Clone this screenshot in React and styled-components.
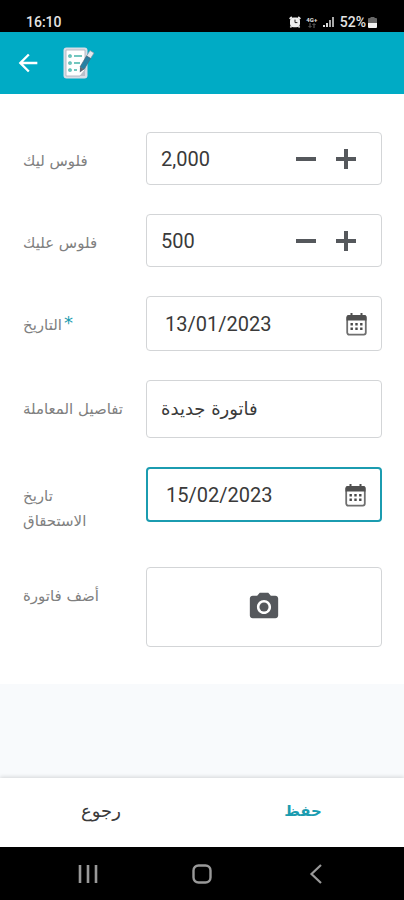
import React from 'react';
import styled, { createGlobalStyle, ThemeProvider } from 'styled-components';
import { MdArrowBack, MdCameraAlt } from 'react-icons/md';

const theme = {
  color: {
    primary: '#00abc5',
    accent: '#1b9cb0',
    border: '#d3d5d7',
    label: '#808080',
    text: '#3a3a3a',
    icon: '#55585c',
    pageBg: '#f8fafc',
  },
  font: {
    body: "Roboto, 'DejaVu Sans', sans-serif",
    arabic: "'DejaVu Sans', sans-serif",
  },
};

const AlarmIcon = () => (
  <svg width="12" height="12" viewBox="0 0 12 12" aria-hidden="true">
    <path
      d="M0.600 2.800 2.800 0.800M11.400 2.800 9.200 0.800M2.400 10.200 1.400 11.400M9.600 10.200l1 1.200"
      stroke="#eee"
      strokeWidth="1.6"
    />
    <rect x="1" y="1.4" width="10" height="9.8" rx="3.6" fill="#eee" />
    <path d="M6 3.6v3h2.4" fill="none" stroke="#222" strokeWidth="1" />
  </svg>
);

const DataArrowsIcon = () => (
  <svg width="8" height="5" viewBox="0 0 8 5" aria-hidden="true">
    <path d="M2 0v4M0.500 3 2 4.500 3.500 3M6 5V1M4.500 2 6 0.500 7.500 2" fill="none" stroke="#666" />
  </svg>
);

const SignalIcon = () => (
  <svg width="12" height="12" viewBox="0 0 12 12" aria-hidden="true">
    <path d="M0 9h2v2H0zM3 7h2v4H3z" fill="#ddd" />
    <path d="M6 4h2v7H6zM9 1h2v10H9z" fill="#aaa" />
  </svg>
);

const BatteryIcon = () => (
  <svg width="9" height="13" viewBox="0 0 9 13" aria-hidden="true">
    <path d="M2.5 1h4v1h1.5q1 0 1 1v4H0V3q0-1 1-1h1.5z" fill="#666" />
    <path d="M0 7h9v4q0 1-1 1H1q-1 0-1-1z" fill="#f2f2f2" />
  </svg>
);

const NotesIcon = () => (
  <svg width="32" height="32" viewBox="0 0 32 32" aria-hidden="true">
    <rect x="0.5" y="0.5" width="24" height="31" rx="3" fill="#d9dde6" />
    <path d="M3 3h19v20l-5 6H3z" fill="#fff" stroke="#a9afba" strokeWidth="0.8" />
    <path d="M22 23v6h-5z" fill="#b9bfca" />
    <g fill="none" stroke="#44b5ab" strokeWidth="1.3">
      <circle cx="7" cy="9" r="1.2" />
      <circle cx="7" cy="16" r="1.2" />
      <circle cx="7" cy="23" r="1.2" />
      <path d="M11 9h8M11 16h6M11 23h3" />
    </g>
    <path d="M27 3.5 31 6l-3.5 5.5-4-2.5z" fill="#e4e8ee" stroke="#8995a5" strokeWidth="0.7" />
    <path d="m23.5 9 4 2.5L21 22.5l-4-2.5z" fill="#2680a3" stroke="#4d6579" strokeWidth="0.7" />
    <path d="m17 20 4 2.5-4.2 3z" fill="#5f6673" />
  </svg>
);

const MinusIcon = () => (
  <svg width="20" height="20" viewBox="0 0 20 20" aria-hidden="true">
    <path d="M0 8h20v4H0z" fill="#55585c" />
  </svg>
);

const PlusIcon = () => (
  <svg width="20" height="20" viewBox="0 0 20 20" aria-hidden="true">
    <path d="M8 0h4v8h8v4h-8v8H8v-8H0V8h8z" fill="#55585c" />
  </svg>
);

const CalendarIcon = () => (
  <svg width="21" height="24" viewBox="0 0 21 24" aria-hidden="true">
    <rect x="1.2" y="4" width="18.6" height="18.6" rx="2" fill="#fff" stroke="#6f6f6f" strokeWidth="1.8" />
    <path d="M0.5 8.6V5q0-2 2-2h2V1h2v2h8V1h2v2h2q2 0 2 2v3.6z" fill="#505050" />
    <g fill="#4a4a4a">
      <path d="M4.5 11h2.4v2.4H4.5zM9.3 11h2.4v2.4H9.3zM14.1 11h2.4v2.4h-2.4z" />
      <path d="M4.5 15.6h2.4V18H4.5zM9.3 15.6h2.4V18H9.3zM14.1 15.6h2.4V18h-2.4z" />
    </g>
  </svg>
);

const StepperField = ({ id, label, value }) => (
  <Row>
    <Label htmlFor={id}>{label}</Label>
    <Field $height={53}>
      <Input id={id} defaultValue={value} inputMode="numeric" />
      <Steps>
        <IconButton type="button" aria-label="إنقاص">
          <MinusIcon />
        </IconButton>
        <IconButton type="button" aria-label="زيادة">
          <PlusIcon />
        </IconButton>
      </Steps>
    </Field>
  </Row>
);

const DateField = ({ id, label, value, required, active }) => (
  <Row>
    <Label htmlFor={id}>
      <span>{label}</span>
      {required && <Required>*</Required>}
    </Label>
    <Field $height={55} $active={active}>
      <Input id={id} defaultValue={value} $indent />
      <IconButton type="button" aria-label="التقويم">
        <CalendarIcon />
      </IconButton>
    </Field>
  </Row>
);

const App = () => (
  <ThemeProvider theme={theme}>
    <GlobalStyle />
    <Page>
      <StatusBar>
        <span>16:10</span>
        <StatusIcons>
          <AlarmIcon />
          <Network>
            <span>4G+</span>
            <DataArrowsIcon />
          </Network>
          <SignalIcon />
          <Battery>
            52%
            <BatteryIcon />
          </Battery>
        </StatusIcons>
      </StatusBar>
      <Header>
        <BackButton type="button" aria-label="رجوع">
          <MdArrowBack size={28} />
        </BackButton>
        <NotesIcon />
      </Header>
      <Form id="invoice" onSubmit={e => e.preventDefault()}>
        <StepperField id="credit" label="فلوس ليك" value="2,000" />
        <StepperField id="debit" label="فلوس عليك" value="500" />
        <DateField id="date" label="التاريخ" value="13/01/2023" required />
        <Row>
          <Label htmlFor="details">تفاصيل المعاملة</Label>
          <Field $height={58}>
            <ArabicInput id="details" dir="rtl" defaultValue="فاتورة جديدة" />
          </Field>
        </Row>
        <DateField id="due" label={'تاريخ\nالاستحقاق'} value="15/02/2023" active />
        <Row>
          <Label htmlFor="photo">أضف فاتورة</Label>
          <PhotoButton id="photo" type="button">
            <MdCameraAlt size={34} />
          </PhotoButton>
        </Row>
      </Form>
      <Filler />
      <Footer>
        <FooterButton type="button">رجوع</FooterButton>
        <FooterButton type="submit" form="invoice" $primary>
          حفظ
        </FooterButton>
      </Footer>
      <NavBar>
        <NavButton type="button" aria-label="Recents">
          <svg width="20" height="20" viewBox="0 0 20 20">
            <path d="M2 1v18M10 1v18M18 1v18" stroke="#999" strokeWidth="2.6" />
          </svg>
        </NavButton>
        <NavButton type="button" aria-label="Home">
          <svg width="20" height="20" viewBox="0 0 20 20">
            <rect x="1.5" y="1.5" width="17" height="17" rx="5" fill="none" stroke="#999" strokeWidth="2.4" />
          </svg>
        </NavButton>
        <NavButton type="button" aria-label="Back">
          <svg width="20" height="20" viewBox="0 0 20 20">
            <path d="M15 1 5.500 10l9.500 9" fill="none" stroke="#999" strokeWidth="2.2" />
          </svg>
        </NavButton>
      </NavBar>
    </Page>
  </ThemeProvider>
);

const GlobalStyle = createGlobalStyle`
  * {
    box-sizing: border-box;
  }
  body {
    margin: 0;
  }
  button,
  input {
    margin: 0;
    padding: 0;
    border: 0;
    background: none;
    font: inherit;
    color: inherit;
    outline: none;
  }
  svg {
    display: block;
    flex: none;
  }
`;
const Page = styled.div`
  display: flex;
  flex-direction: column;
  min-height: 100vh;
  background: ${({ theme }) => theme.color.pageBg};
  color: ${({ theme }) => theme.color.text};
  font-family: ${({ theme }) => theme.font.body};
`;
const StatusBar = styled.div`
  display: flex;
  align-items: center;
  justify-content: space-between;
  height: 32px;
  padding: 12px 27px 0 26px;
  background: #000;
  color: #e4e4e4;
  font-size: 14px;
  font-weight: 500;
  line-height: 20px;
`;
const StatusIcons = styled.div`
  display: flex;
  align-items: center;
  gap: 5px;
`;
const Network = styled.div`
  display: flex;
  flex-direction: column;
  align-items: center;
  width: 12px;
  font-size: 6px;
  font-weight: 700;
  line-height: 7px;
`;
const Battery = styled.div`
  display: flex;
  align-items: center;
  gap: 2px;
`;
const Header = styled.header`
  display: flex;
  align-items: center;
  gap: 21px;
  height: 62px;
  padding: 0 14px;
  background: ${({ theme }) => theme.color.primary};
  color: #fff;
`;
const BackButton = styled.button`
  display: flex;
`;
const Form = styled.form`
  display: flex;
  flex-direction: column;
  gap: 29px;
  padding: 38px 22px 37px 23px;
  background: #fff;
`;
const Row = styled.div`
  display: grid;
  grid-template-columns: 123px minmax(0, 1fr);
  align-items: start;
`;
const Label = styled.label`
  display: flex;
  align-items: flex-start;
  padding: 17px 12px 4px 0;
  color: ${({ theme }) => theme.color.label};
  font-family: ${({ theme }) => theme.font.arabic};
  font-size: 15px;
  line-height: 25px;
  white-space: pre-line;
`;
const Required = styled.span`
  margin-left: 2px;
  color: ${({ theme }) => theme.color.accent};
  font-size: 18px;
  line-height: 20px;
`;
const Field = styled.div`
  display: flex;
  align-items: center;
  height: ${({ $height }) => $height}px;
  padding: 0 14px;
  border: ${({ $active }) => ($active ? 2 : 1)}px solid
    ${({ theme, $active }) => ($active ? theme.color.accent : theme.color.border)};
  border-radius: 4px;
`;
const Input = styled.input`
  flex: 1;
  width: 100%;
  min-width: 0;
  padding-left: ${({ $indent }) => ($indent ? 4 : 0)}px;
  font-size: 20px;
  line-height: 28px;
`;
const ArabicInput = styled(Input)`
  font-family: ${({ theme }) => theme.font.arabic};
  font-size: 18px;
  text-align: left;
`;
const Steps = styled.div`
  display: flex;
  gap: 20px;
  padding-right: 11px;
`;
const IconButton = styled.button`
  display: flex;
`;
const PhotoButton = styled.button`
  display: flex;
  align-items: center;
  justify-content: center;
  height: 80px;
  border: 1px solid ${({ theme }) => theme.color.border};
  border-radius: 4px;
  color: ${({ theme }) => theme.color.icon};
`;
const Filler = styled.div`
  flex: 1;
`;
const Footer = styled.footer`
  display: grid;
  grid-template-columns: 1fr 1fr;
  height: 69px;
  padding-bottom: 4px;
  background: #fff;
  box-shadow: 0 -1px 4px rgba(0, 0, 0, 0.15);
`;
const FooterButton = styled.button`
  color: ${({ theme, $primary }) => ($primary ? theme.color.accent : theme.color.text)};
  font-family: ${({ theme }) => theme.font.arabic};
  font-size: ${({ $primary }) => ($primary ? 15 : 18)}px;
  font-weight: ${({ $primary }) => ($primary ? 700 : 400)};
`;
const NavBar = styled.nav`
  display: flex;
  align-items: center;
  justify-content: space-between;
  height: 53px;
  padding: 0 78px;
  background: #000;
`;
const NavButton = styled.button`
  display: flex;
`;
export default App;
